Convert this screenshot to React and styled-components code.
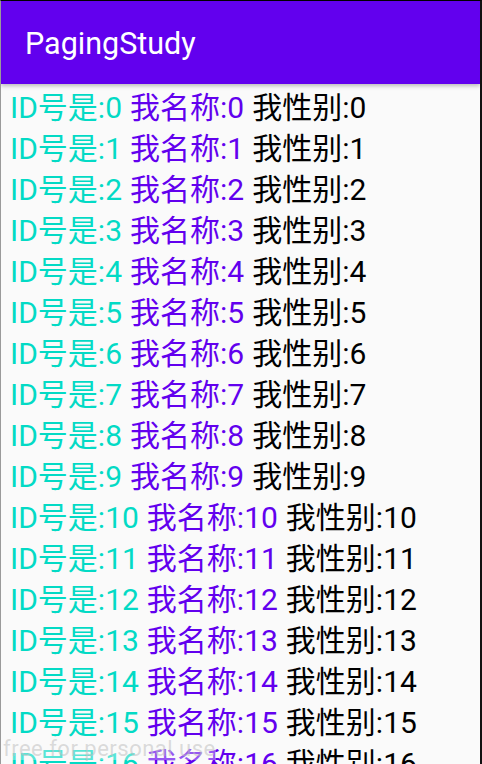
import React from "react";
import styled, { createGlobalStyle } from "styled-components";

const GlobalStyle = createGlobalStyle`
  html, body {
    margin: 0;
    padding: 0;
    background: #000;
    overflow: hidden;
  }
`;

const rows = Array.from({ length: 18 }, (_, i) => i);

export default function App() {
  return (
    <>
      <GlobalStyle />
      <Frame>
        <AppBar>
          <Title>PagingStudy</Title>
        </AppBar>
        <List>
          {rows.map((i) => (
            <Row key={i}>
              <Cell color="#03dac5">ID号是:{i}</Cell>
              <Cell color="#6200ee">我名称:{i}</Cell>
              <Cell color="#000000">我性别:{i}</Cell>
            </Row>
          ))}
        </List>
        <Watermark>free for personal use</Watermark>
      </Frame>
    </>
  );
}

const Frame = styled.div`
  position: relative;
  width: 482px;
  height: 764px;
  box-sizing: border-box;
  border-top: 1px solid #000;
  border-left: 1px solid #9a9a9a;
  border-right: 2px solid #111;
  background: #fafafa;
  overflow: hidden;
  display: flex;
  flex-direction: column;
`;

const AppBar = styled.div`
  height: 83px;
  flex-shrink: 0;
  background: #6200ee;
  display: flex;
  align-items: center;
  padding-left: 24px;
  box-shadow: 0 2px 4px rgba(0, 0, 0, 0.25);
  position: relative;
  z-index: 1;
`;

const Title = styled.div`
  font-family: Roboto, "Noto Sans", sans-serif;
  font-size: 30.5px;
  color: #fff;
  margin-top: 2px;
`;

const List = styled.div`
  display: flex;
  flex-direction: column;
  padding-left: 9px;
`;

const Row = styled.div`
  display: flex;
  gap: 8px;
  height: 41px;
  align-items: center;
  font-family: Roboto, "Noto Sans CJK SC", sans-serif;
  font-size: 30px;
  white-space: nowrap;
`;

const Cell = styled.span`
  color: ${(p) => p.color};
`;

const Watermark = styled.div`
  position: absolute;
  left: 2px;
  bottom: 4px;
  font-family: Roboto, "Noto Sans", sans-serif;
  font-size: 22px;
  line-height: 22px;
  letter-spacing: 0.5px;
  color: rgba(190, 190, 190, 0.55);
  background: rgba(250, 250, 250, 0.35);
  z-index: 2;
`;
